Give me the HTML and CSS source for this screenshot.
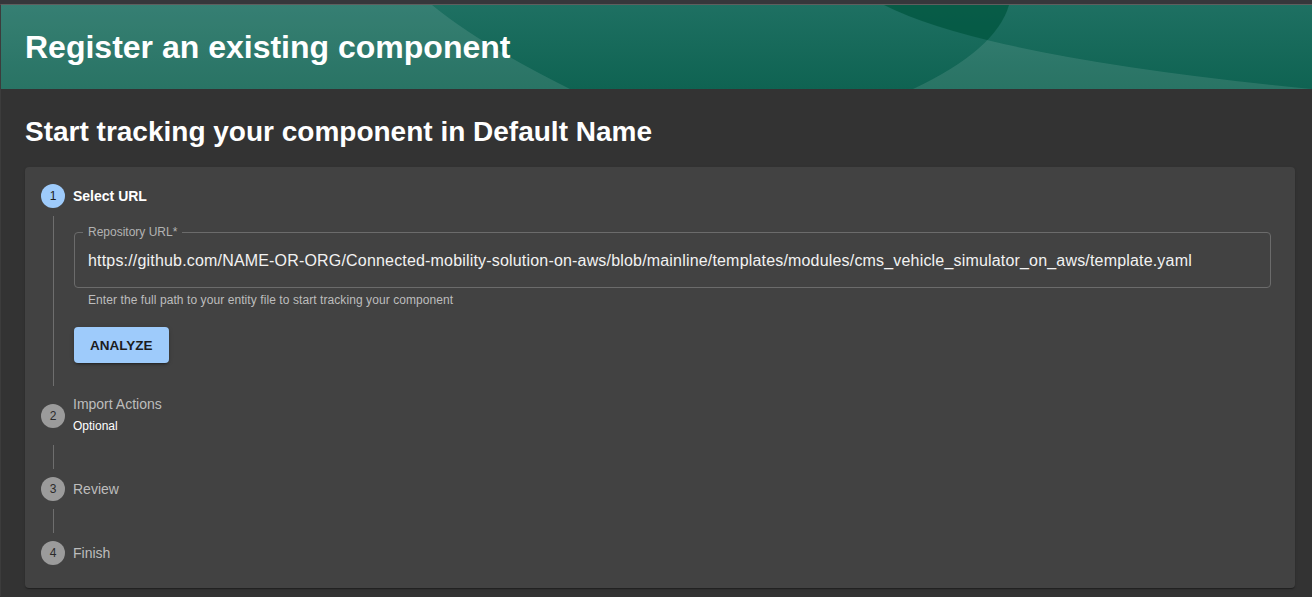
FILE: index.html
```html
<!DOCTYPE html>
<html lang="en">
<head>
<meta charset="utf-8">
<title>Register an existing component</title>
<link rel="stylesheet" href="styles.css">
</head>
<body>
<div class="topbar"></div>
<div class="app">
  <header class="header">
    <svg class="header-bg" viewBox="0 0 1311 84" preserveAspectRatio="none" aria-hidden="true">
      <defs>
        <linearGradient id="g" x1="0" y1="0" x2="0" y2="1">
          <stop offset="0" stop-color="#1e7062"/>
          <stop offset="1" stop-color="#0f6352"/>
        </linearGradient>
        <clipPath id="leftOf3"><path d="M0,0 L1008,0 Q995,45 912,84 L0,84 Z"/></clipPath>
        <clipPath id="rightOf3"><path d="M1008,0 Q995,45 912,84 L1311,84 L1311,0 Z"/></clipPath>
      </defs>
      <rect x="0" y="0" width="1311" height="84" fill="url(#g)"/>
      <path d="M0,0 L431,0 Q480,40 569,84 L0,84 Z" fill="#ffffff" fill-opacity="0.11"/>
      <path d="M883,0 Q985,52 1311,84 L1311,0 Z" fill="#00553f" fill-opacity="0.75" clip-path="url(#leftOf3)"/>
      <path d="M883,0 Q985,52 1311,84 L1311,84 L0,84 L0,0 Z" fill="#ffffff" fill-opacity="0.11" clip-path="url(#rightOf3)"/>
    </svg>
    <h1 class="header-title">Register an existing component</h1>
  </header>
  <main class="content">
    <h2 class="page-title">Start tracking your component in Default Name</h2>
    <section class="card">
      <div class="step">
        <div class="step-label">
          <span class="step-icon active">1</span>
          <span class="step-text active-text">Select URL</span>
        </div>
        <div class="step-content">
          <div class="field">
            <span class="field-label">Repository URL*</span>
            <div class="field-input">https://github.com/NAME-OR-ORG/Connected-mobility-solution-on-aws/blob/mainline/templates/modules/cms_vehicle_simulator_on_aws/template.yaml</div>
          </div>
          <p class="helper">Enter the full path to your entity file to start tracking your component</p>
          <button class="btn" type="button">ANALYZE</button>
        </div>
      </div>
      <div class="step">
        <div class="step-label">
          <span class="step-icon">2</span>
          <span class="step-texts">
            <span class="step-text two">Import Actions</span>
            <span class="step-optional">Optional</span>
          </span>
        </div>
      </div>
      <div class="connector"></div>
      <div class="step">
        <div class="step-label">
          <span class="step-icon">3</span>
          <span class="step-text">Review</span>
        </div>
      </div>
      <div class="connector"></div>
      <div class="step">
        <div class="step-label">
          <span class="step-icon">4</span>
          <span class="step-text">Finish</span>
        </div>
      </div>
    </section>
  </main>
</div>
</body>
</html>
```

FILE: styles.css
```css
* { box-sizing: border-box; }

html, body {
  margin: 0;
  padding: 0;
  background: #333333;
  font-family: "Liberation Sans", Arial, Helvetica, sans-serif;
  color: #ffffff;
}

.topbar {
  height: 4px;
  background: #36373b;
}

.app {
  border-top: 1px solid #5e5e5e;
  border-left: 1px solid #3c3c3c;
  min-height: 592px;
}

.header {
  position: relative;
  height: 84px;
  display: flex;
  align-items: center;
  padding-left: 24px;
  overflow: hidden;
  background: #176a5b;
}

.header-bg {
  position: absolute;
  left: 0;
  top: 0;
  width: 100%;
  height: 100%;
  display: block;
}

.header-title {
  position: relative;
  margin: 0;
  font-size: 32px;
  line-height: 36px;
  font-weight: 700;
  color: #ffffff;
  letter-spacing: 0;
}

.content {
  padding: 27px 17px 0 24px;
}

.page-title {
  margin: 0 0 19px 0;
  font-size: 28px;
  line-height: 32px;
  font-weight: 700;
  color: #ffffff;
}

.card {
  background: #424242;
  border-radius: 4px;
  padding: 9px 16px 15px 16px;
  box-shadow: 0 2px 1px -1px rgba(0,0,0,0.2), 0 1px 1px 0 rgba(0,0,0,0.14), 0 1px 3px 0 rgba(0,0,0,0.12);
}

.step-label {
  display: flex;
  align-items: center;
  padding: 8px 0;
}

.step-icon {
  width: 24px;
  height: 24px;
  border-radius: 50%;
  background: #9b9b9b;
  color: #2a2a2a;
  font-size: 12px;
  line-height: 24px;
  text-align: center;
  flex: 0 0 24px;
}

.step-icon.active {
  background: #9ecbfb;
  color: #1e1e1e;
}

.step-text {
  margin-left: 8px;
  font-size: 14px;
  line-height: 20px;
  color: #bdbdbd;
}

.active-text {
  color: #ffffff;
  font-weight: 700;
}

.step-texts {
  display: flex;
  flex-direction: column;
  margin-left: 8px;
}

.step-texts .step-text {
  margin-left: 0;
  line-height: 21px;
}

.step-optional {
  font-size: 12px;
  line-height: 22px;
  color: #ffffff;
}

.step-content {
  margin-left: 12px;
  border-left: 1px solid #6e6e6e;
  padding: 16px 8px 23px 20px;
}

.field {
  position: relative;
  border: 1px solid #6b6b6b;
  border-radius: 4px;
  height: 56px;
  display: flex;
  align-items: center;
  padding: 0 13px;
}

.field-label {
  position: absolute;
  left: 8px;
  top: -8px;
  padding: 0 5px;
  background: #424242;
  font-size: 12px;
  line-height: 14px;
  color: #b3b3b3;
}

.field-input {
  font-size: 16px;
  line-height: 19px;
  letter-spacing: 0.18px;
  color: #f2f2f2;
  white-space: nowrap;
  overflow: hidden;
}

.helper {
  margin: 2px 14px 0 14px;
  font-size: 12px;
  line-height: 20px;
  letter-spacing: 0.08px;
  color: #bdbdbd;
}

.btn {
  display: block;
  margin-top: 17px;
  height: 36px;
  padding: 0 16px;
  border: none;
  border-radius: 4px;
  background: #9ecbfb;
  color: #1c1c1c;
  font-family: inherit;
  font-size: 13.5px;
  font-weight: 700;
  letter-spacing: 0;
  box-shadow: 0 3px 1px -2px rgba(0,0,0,0.2), 0 2px 2px 0 rgba(0,0,0,0.14), 0 1px 5px 0 rgba(0,0,0,0.12);
}

.connector {
  margin-left: 12px;
  border-left: 1px solid #6e6e6e;
  height: 24px;
}
```
